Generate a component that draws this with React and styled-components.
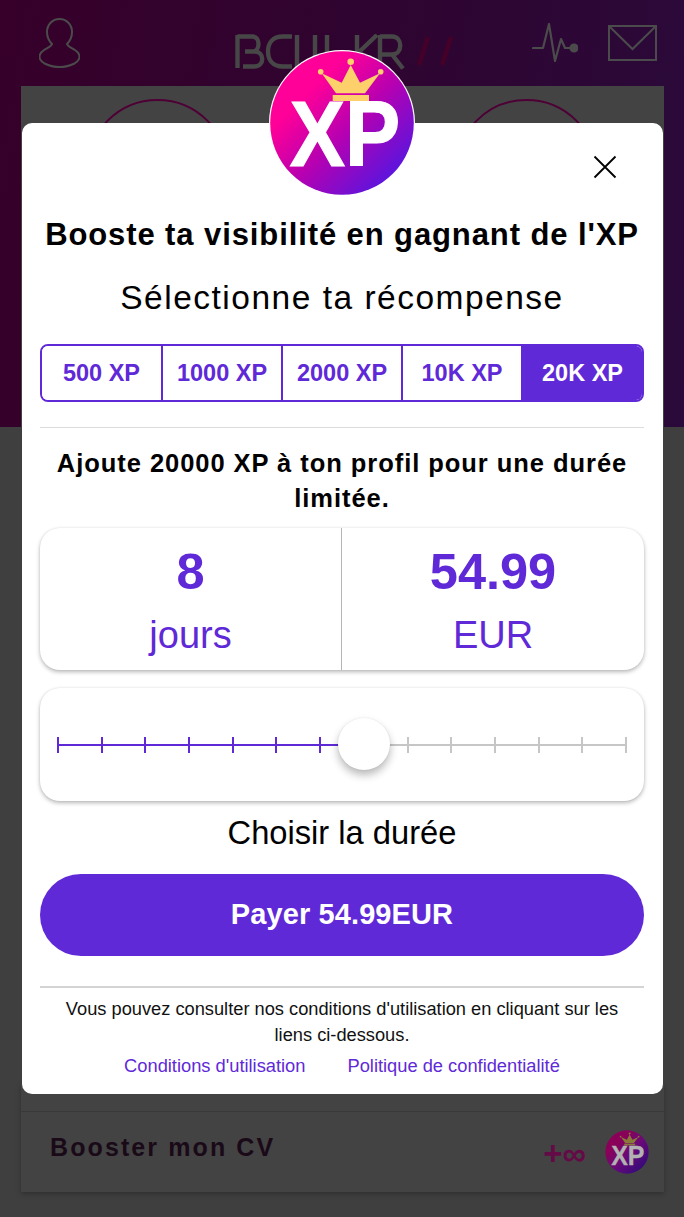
import React from "react";
import styled, { createGlobalStyle } from "styled-components";

const Global = createGlobalStyle`
  html, body { margin: 0; padding: 0; }
  body { font-family: "Liberation Sans", Arial, sans-serif; background: #3f3f3f; }
  * { box-sizing: border-box; }
`;

const Page = styled.div`
  position: relative;
  width: 684px;
  height: 1217px;
  overflow: hidden;
  background: #3f3f3f;
`;

const Hero = styled.header`
  height: 427px;
  background: linear-gradient(100deg, #36002a 0%, #2f0430 50%, #2a0a3a 100%);
  display: flex;
  flex-direction: column;
`;

const TopBar = styled.div`
  height: 86px;
  display: flex;
  align-items: center;
  justify-content: space-between;
  padding: 0 27px 0 39px;
`;

const TopIcons = styled.div`
  display: flex;
  align-items: center;
  gap: 30px;
`;

const Brand = styled.div`
  position: absolute;
  left: 235px;
  top: 34px;
  display: flex;
`;

const HeroPanel = styled.div`
  flex: 1;
  margin: 0 20px 0 21px;
  background: #434343;
  display: flex;
  justify-content: space-between;
  padding: 13px 66px 0 65px;
`;

const Ring = styled.div`
  width: 143px;
  height: 143px;
  border-radius: 50%;
  border: 2.5px solid #4e0036;
`;

const BelowCard = styled.section`
  position: absolute;
  left: 21px;
  top: 1084px;
  width: 643px;
  height: 108px;
  padding-top: 27px;
  background: #434343;
  box-shadow: 0 2px 5px rgba(0, 0, 0, 0.25);
`;

const BelowRow = styled.div`
  height: 81px;
  border-top: 1px solid #393939;
  display: flex;
  align-items: center;
  padding: 0 15px 0 29px;
`;

const BelowTitle = styled.div`
  flex: 1;
  margin-top: -9px;
  font-size: 25px;
  font-weight: 700;
  letter-spacing: 2.1px;
  color: #1a0a18;
`;

const BoostAmount = styled.div`
  font-size: 33px;
  font-weight: 700;
  color: #640a46;
  margin-right: 19px;
  line-height: 1;
  margin-top: 2px;
`;

const Modal = styled.main`
  position: absolute;
  left: 22px;
  top: 123px;
  width: 641px;
  height: 971px;
  background: #fff;
  border-radius: 10px;
  padding: 0 19px 0 18px;
  display: flex;
  flex-direction: column;
  align-items: stretch;
`;

const Badge = styled.div`
  position: absolute;
  left: 247px;
  top: -73px;
  width: 146px;
  height: 146px;
`;

const Close = styled.button`
  position: absolute;
  top: 30px;
  right: 44px;
  width: 28px;
  height: 28px;
  padding: 0;
  border: 0;
  background: none;
  display: flex;
`;

const Title = styled.h1`
  margin: 92px 0 0;
  font-size: 31px;
  line-height: 40px;
  font-weight: 700;
  letter-spacing: 0.9px;
  text-align: center;
  color: #000;
  white-space: nowrap;
`;

const Subtitle = styled.h2`
  margin: 23px 0 0;
  font-size: 33.5px;
  line-height: 40px;
  font-weight: 400;
  letter-spacing: 1.5px;
  text-align: center;
  color: #000;
`;

const Tabs = styled.div`
  margin-top: 26px;
  height: 58px;
  display: grid;
  grid-template-columns: 121px 120px 120px 120px 1fr;
  border: 2px solid #6029d8;
  border-radius: 8px;
  overflow: hidden;
`;

const Tab = styled.div`
  display: flex;
  align-items: center;
  justify-content: center;
  font-size: 23.5px;
  font-weight: 700;
  color: ${(p) => (p.$active ? "#fff" : "#6029d8")};
  background: ${(p) => (p.$active ? "#6029d8" : "#fff")};
  border-right: ${(p) => (p.$active ? "0" : "2px solid #6029d8")};
`;

const Rule = styled.hr`
  margin: ${(p) => p.$m};
  border: 0;
  border-top: ${(p) => p.$w || 1}px solid ${(p) => p.$c || "#dcdcdc"};
`;

const Description = styled.p`
  margin: 0;
  font-size: 25.5px;
  line-height: 35px;
  font-weight: 700;
  letter-spacing: 0.95px;
  text-align: center;
  color: #000;
`;

const Summary = styled.div`
  margin-top: 12px;
  height: 142px;
  display: grid;
  grid-template-columns: 1fr 1fr;
  border-radius: 20px;
  background: #fff;
  box-shadow: 0 2px 4px rgba(0, 0, 0, 0.28), 0 0 2px rgba(0, 0, 0, 0.08);
`;

const SummaryCell = styled.div`
  display: flex;
  flex-direction: column;
  align-items: center;
  color: #6029d8;
  border-right: ${(p) => (p.$divider ? "1px solid #b5b5b5" : "0")};
`;

const SummaryValue = styled.div`
  margin-top: 16px;
  font-size: 50.5px;
  line-height: 56px;
  font-weight: 700;
`;

const SummaryUnit = styled.div`
  margin-top: 11px;
  font-size: 38px;
  line-height: 48px;
`;

const SliderCard = styled.div`
  margin-top: 18px;
  height: 113px;
  padding: 0 17px;
  display: flex;
  align-items: center;
  border-radius: 20px;
  background: #fff;
  box-shadow: 0 2px 4px rgba(0, 0, 0, 0.28), 0 0 2px rgba(0, 0, 0, 0.08);
`;

const Track = styled.div`
  position: relative;
  flex: 1;
  height: 16px;
  display: flex;
  justify-content: space-between;
  &::before {
    content: "";
    position: absolute;
    left: 0;
    right: 0;
    top: 7px;
    height: 2px;
    background: #c6c6c6;
  }
  &::after {
    content: "";
    position: absolute;
    left: 0;
    width: 50%;
    top: 7px;
    height: 2px;
    background: #6029d8;
  }
`;

const Tick = styled.span`
  position: relative;
  z-index: 1;
  width: 2px;
  height: 16px;
  background: ${(p) => (p.$on ? "#6029d8" : "#c6c6c6")};
`;

const Thumb = styled.span`
  position: absolute;
  z-index: 2;
  left: 281px;
  top: -19px;
  width: 52px;
  height: 52px;
  border-radius: 50%;
  background: #fff;
  box-shadow: 0 5px 8px rgba(0, 0, 0, 0.28), 0 0 2px rgba(0, 0, 0, 0.08);
`;

const DurationLabel = styled.div`
  margin-top: 10px;
  font-size: 32.7px;
  line-height: 44px;
  text-align: center;
  color: #000;
`;

const PayButton = styled.button`
  margin-top: 19px;
  height: 82px;
  padding: 0 0 2px;
  border: 0;
  border-radius: 41px;
  background: #6029d8;
  color: #fff;
  font-family: inherit;
  font-size: 29px;
  font-weight: 700;
  letter-spacing: 0.1px;
`;

const Legal = styled.p`
  margin: 8px 0 0;
  padding: 0 14px;
  font-size: 18.25px;
  line-height: 26px;
  text-align: center;
  color: #111;
`;

const Links = styled.div`
  margin-top: 5px;
  display: flex;
  justify-content: center;
  gap: 42px;
`;

const LinkText = styled.a`
  font-size: 18.3px;
  line-height: 26px;
  color: #6029d8;
`;

const UserIcon = () => (
  <svg width="41" height="50" viewBox="0 0 41 50" fill="none" stroke="#4b4b4b" strokeWidth="2">
    <path d="M20.500 1c7 0 12.500 5.500 12.500 13 0 5-2 9-5 12 1 3 5 4 8 6 3 2 4.500 4 4.500 7 0 3-2 4.500-5 6.500-4 2-9 3.500-15 3.500s-11-1.500-15-3.500c-3-2-5-3.500-5-6.500s1.500-5 4.500-7c3-2 7-3 8-6-3-3-5-7-5-12C8 6.500 13.500 1 20.500 1z" />
  </svg>
);

const PulseIcon = () => (
  <svg width="46" height="40" viewBox="0 0 46 40" fill="none" stroke="#4b4b4b" strokeWidth="2.200" strokeLinejoin="round" strokeLinecap="round">
    <path d="M1 25h10l6-24 6 37 6-22 4 9h5" />
    <circle cx="42" cy="25" r="3.500" fill="#4b4b4b" />
  </svg>
);

const MailIcon = () => (
  <svg width="49" height="36" viewBox="0 0 49 36" fill="none" stroke="#4b4b4b" strokeWidth="2">
    <rect x="1" y="1" width="47" height="34" />
    <path d="M2 2l22.500 22L47 2" />
  </svg>
);

const Logo = () => (
  <svg width="220" height="36" viewBox="0 0 220 36" fill="none" stroke="#474747" strokeWidth="4.400">
    <path d="M2.500 1v33M2.500 2.500h15c8 0 8 15 0 15h-7M10 17.500h9c11 0 11 15 0 15H8" />
    <path d="M57 2.500h-9C37 2.500 33 10 33 17.500s4 15 15 15h9" />
    <path d="M62 1v31h12M80 1v31M92 1v20" />
    <path d="M122 1v33M142 1L124 18l20 16" />
    <path d="M145 1v33M145 2.500h12c11 0 11 18 0 18h-12M157 20.500l11 14" />
    <path d="M184 31l9-28M207 31l9-28" stroke="#440029" strokeWidth="4.500" />
  </svg>
);

const XpBadge = ({ size = 146, dim = false, id = "xp" }) => (
  <svg width={size} height={size} viewBox="0 0 146 146">
    <defs>
      <linearGradient id={id} x1="0.150" y1="0.150" x2="0.850" y2="0.850">
        <stop offset="0.180" stopColor={dim ? "#8a0058" : "#ff0098"} />
        <stop offset="0.550" stopColor={dim ? "#6a0a78" : "#b800b0"} />
        <stop offset="1" stopColor={dim ? "#3a0a7a" : "#5f14dc"} />
      </linearGradient>
    </defs>
    {!dim && <circle cx="73" cy="73" r="73" fill="#fff" />}
    <circle cx="73" cy="73" r="71.800" fill={`url(#${id})`} />
    <g fill={dim ? "#8a7a3a" : "#fdd06c"}>
      <path d="M52.700 23.300L72.700 32.700 81.700 15 91 32.700 111 23.300 96 43.300H67z" />
      <rect x="63.700" y="45" width="36.300" height="6" />
      <circle cx="81.700" cy="11.700" r="3.300" />
      <circle cx="51.700" cy="21.700" r="2.800" />
      <circle cx="111.700" cy="21.700" r="2.800" />
    </g>
    <text
      x="23"
      y="116"
      transform="scale(0.9 1)"
      fontFamily="Liberation Sans"
      fontWeight="700"
      fontSize="92"
      fill={dim ? "#b2b2b2" : "#fff"}
      stroke={dim ? "#b2b2b2" : "#fff"}
      strokeWidth="1.200"
    >
      XP
    </text>
  </svg>
);

const X = () => (
  <svg width="28" height="28" viewBox="0 0 28 28" stroke="#000" strokeWidth="1.800">
    <path d="M3.500 3.500l21 21M24.500 3.500l-21 21" />
  </svg>
);

const tabs = ["500 XP", "1000 XP", "2000 XP", "10K XP", "20K XP"];

export default function App() {
  return (
    <Page>
      <Global />
      <Hero>
        <TopBar>
          <UserIcon />
          <TopIcons>
            <PulseIcon />
            <MailIcon />
          </TopIcons>
        </TopBar>
        <Brand>
          <Logo />
        </Brand>
        <HeroPanel>
          <Ring />
          <Ring />
        </HeroPanel>
      </Hero>
      <BelowCard>
        <BelowRow>
          <BelowTitle>Booster mon CV</BelowTitle>
          <BoostAmount>+∞</BoostAmount>
          <XpBadge size={44} dim id="xp2" />
        </BelowRow>
      </BelowCard>
      <Modal>
        <Badge>
          <XpBadge />
        </Badge>
        <Close aria-label="Fermer">
          <X />
        </Close>
        <Title>Booste ta visibilité en gagnant de l'XP</Title>
        <Subtitle>Sélectionne ta récompense</Subtitle>
        <Tabs>
          {tabs.map((t, i) => (
            <Tab key={t} $active={i === 4}>{t}</Tab>
          ))}
        </Tabs>
        <Rule $m="25px 0 18px" />
        <Description>Ajoute 20000 XP à ton profil pour une durée limitée.</Description>
        <Summary>
          <SummaryCell $divider>
            <SummaryValue>8</SummaryValue>
            <SummaryUnit>jours</SummaryUnit>
          </SummaryCell>
          <SummaryCell>
            <SummaryValue>54.99</SummaryValue>
            <SummaryUnit>EUR</SummaryUnit>
          </SummaryCell>
        </Summary>
        <SliderCard>
          <Track>
            {Array.from({ length: 14 }, (_, i) => (
              <Tick key={i} $on={i < 7} />
            ))}
            <Thumb />
          </Track>
        </SliderCard>
        <DurationLabel>Choisir la durée</DurationLabel>
        <PayButton>Payer 54.99EUR</PayButton>
        <Rule $m="30px 0 0" $w={2} $c="#d4d4d4" />
        <Legal>
          Vous pouvez consulter nos conditions d'utilisation en cliquant sur les liens ci-dessous.
        </Legal>
        <Links>
          <LinkText>Conditions d'utilisation</LinkText>
          <LinkText>Politique de confidentialité</LinkText>
        </Links>
      </Modal>
    </Page>
  );
}
